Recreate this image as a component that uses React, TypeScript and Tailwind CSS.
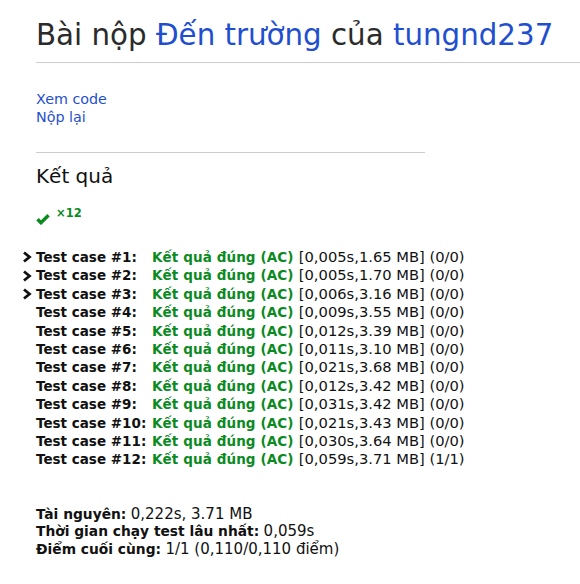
import React from "react";

const rows = [
  { n: 1, d: "[0,005s,1.65 MB] (0/0)", arrow: true },
  { n: 2, d: "[0,005s,1.70 MB] (0/0)", arrow: true },
  { n: 3, d: "[0,006s,3.16 MB] (0/0)", arrow: true },
  { n: 4, d: "[0,009s,3.55 MB] (0/0)" },
  { n: 5, d: "[0,012s,3.39 MB] (0/0)" },
  { n: 6, d: "[0,011s,3.10 MB] (0/0)" },
  { n: 7, d: "[0,021s,3.68 MB] (0/0)" },
  { n: 8, d: "[0,012s,3.42 MB] (0/0)" },
  { n: 9, d: "[0,031s,3.42 MB] (0/0)" },
  { n: 10, d: "[0,021s,3.43 MB] (0/0)" },
  { n: 11, d: "[0,030s,3.64 MB] (0/0)" },
  { n: 12, d: "[0,059s,3.71 MB] (1/1)" },
];

function Chevron() {
  return (
    <svg width="10" height="12" viewBox="0 0 10 12">
      <path d="M2 1.5 L7.5 6 L2 10.5" fill="none" stroke="#111" strokeWidth="2.8" strokeLinejoin="miter" />
    </svg>
  );
}

export default function App() {
  return (
    <div className="w-[580px] h-[584px] bg-white overflow-hidden text-[#111] font-['DejaVu_Sans',sans-serif]">
      <div className="pl-[36px]">
        <h1 className="pt-[17px] text-[29.3px] leading-[36px] text-[#2b2b2b] font-normal whitespace-nowrap">
          Bài nộp <span className="text-[#1f4fcf]">Đến trường</span> của <span className="text-[#1f4fcf]">tungnd237</span>
        </h1>
        <div className="mt-[9px] h-px bg-[#cccccc]" />
        <div className="mt-[27px] text-[14.3px] leading-[18px] text-[#1f4fcf]">
          <div>Xem code</div>
          <div>Nộp lại</div>
        </div>
        <div className="mt-[26px] w-[389px] h-px bg-[#cccccc]" />
        <h2 className="mt-[10px] text-[20px] leading-[26px] text-[#111]">Kết quả</h2>
        <div className="mt-[17px] flex items-start gap-[6px] h-[20px]">
          <svg width="14" height="12" viewBox="0 0 14 12" className="mt-[7px]">
            <path d="M1.5 6.2 L5 9.7 L12.5 2.2" fill="none" stroke="#0b8a1f" strokeWidth="3.4" />
          </svg>
          <span className="text-[11.5px] font-bold text-[#0b8a1f] leading-[14px]">×12</span>
        </div>
        <div className="mt-[22px] text-[13.5px] leading-[18.4px]">
          {rows.map((r) => (
            <div key={r.n} className="flex items-baseline whitespace-nowrap">
              <div className="-ml-[14px] w-[14px] self-center flex items-center">{r.arrow ? <Chevron /> : null}</div>
              <div className="w-[116px] font-bold text-[#111]">Test case #{r.n}:</div>
              <div>
                <span className="font-bold text-[#0b8a1f] tracking-[0.1px]">Kết quả đúng (AC)</span>{" "}
                <span className="text-[#111] text-[14.7px] ml-[1px]">{r.d}</span>
              </div>
            </div>
          ))}
        </div>
        <div className="mt-[37px] text-[13.8px] leading-[17.5px] text-[#111]">
          <div><span className="font-bold">Tài nguyên:</span> <span className="text-[15px]">0,222s, 3.71 MB</span></div>
          <div><span className="font-bold">Thời gian chạy test lâu nhất:</span> <span className="text-[15px]">0,059s</span></div>
          <div><span className="font-bold">Điểm cuối cùng:</span> <span className="text-[15px]">1/1 (0,110/0,110 điểm)</span></div>
        </div>
      </div>
    </div>
  );
}
